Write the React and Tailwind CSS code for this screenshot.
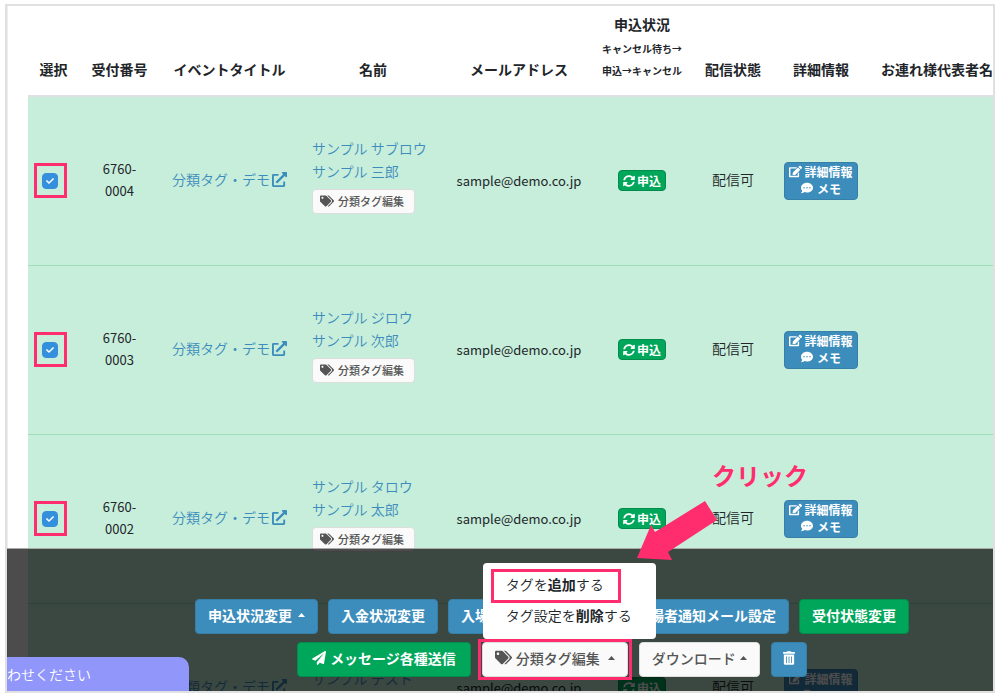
import { FaCheck, FaCommentDots, FaEdit, FaExternalLinkAlt, FaPaperPlane, FaSyncAlt, FaTags, FaTrashAlt } from "react-icons/fa";

const rows = [
  { number: "0004", kana: "サンプル サブロウ", name: "サンプル 三郎", marked: true },
  { number: "0003", kana: "サンプル ジロウ", name: "サンプル 次郎", marked: true },
  { number: "0002", kana: "サンプル タロウ", name: "サンプル 太郎", marked: true },
  { number: "0001", kana: "サンプル テスト", name: "サンプル テスト", marked: false },
];

function Caret() {
  return (
    <svg className="h-1 w-[7px]" viewBox="0 0 8 4" preserveAspectRatio="none" fill="currentColor" aria-hidden="true">
      <path d="M0 4 L4 0 L8 4 Z" />
    </svg>
  );
}

const base = "flex h-[35px] items-center rounded border pb-1 text-sm";
const blue = "border-[#367fa9] bg-[#3c8dbc] font-bold text-white";
const green = "border-[#008d4c] bg-[#00a65a] font-bold text-white";
const light = "border-[#dddddd] bg-[#fafafa] font-medium text-[#555555]";

function Row({ row }) {
  const id = `select-${row.number}`;
  return (
    <tr className="h-[169px] border-b border-[#9fdcb9] bg-[#c7eeda] font-[350]">
      <td className="pl-1.5">
        <div className={`relative flex h-[35px] w-[33px] items-center border-3 pl-[5px] ${row.marked ? "border-[#ff2d6e]" : "border-transparent"}`}>
          <input
            id={id}
            type="checkbox"
            defaultChecked
            aria-label={`6760-${row.number}を選択`}
            className="size-4 appearance-none rounded border border-[#3490dc] bg-white checked:bg-[#3490dc]"
          />
          <FaCheck className="pointer-events-none absolute left-[9px] size-2 text-white" />
        </div>
      </td>
      <td className="pb-0.5 text-center text-[13px] leading-[22px] font-normal">
        6760-
        <br />
        {row.number}
      </td>
      <td className="px-3 pb-0.5">
        <a href="#event" className="flex items-center whitespace-nowrap text-[#3c8dbc]">
          分類タグ・デモ
          <FaExternalLinkAlt className="ml-0.5 size-[15px] shrink-0" />
        </a>
      </td>
      <td className="pl-[13px]">
        <div className="flex flex-col items-start pb-[11px]">
          <a href="#detail" className="whitespace-nowrap text-[#3c8dbc]">{row.kana}</a>
          <a href="#detail" className="whitespace-nowrap text-[#3c8dbc]">{row.name}</a>
          <button type="button" className="mt-1.5 flex h-[25px] items-center gap-1 rounded-sm border border-[#dddddd] bg-[#fafafa] pr-2.5 pl-[7px] text-[11px] font-medium whitespace-nowrap text-[#555555]">
            <FaTags className="size-3.5" />
            分類タグ編集
          </button>
        </div>
      </td>
      <td className="text-center text-[13px] font-normal">sample@demo.co.jp</td>
      <td>
        <button type="button" className="mx-auto flex h-[21px] items-center gap-0.5 rounded-sm border border-[#008d4c] bg-[#00a65a] px-1 text-xs font-bold text-white">
          <FaSyncAlt className="size-3" />
          申込
        </button>
      </td>
      <td className="pb-0.5 text-center">配信可</td>
      <td>
        <button type="button" className="mx-auto flex h-[38px] w-[74px] flex-col items-center justify-center rounded border border-[#367fa9] bg-[#3c8dbc] pb-0.5 text-xs leading-[17px] font-bold text-white">
          <span className="flex items-center gap-0.5">
            <FaEdit className="size-[13px]" />
            詳細情報
          </span>
          <span className="flex items-center gap-1">
            <FaCommentDots className="size-3" />
            メモ
          </span>
        </button>
      </td>
      <td></td>
    </tr>
  );
}

export default function App() {
  return (
    <div className="h-screen bg-white pt-1 pr-[5px] pb-1.5 pl-[5px] font-[family-name:'Noto_Sans_CJK_JP',sans-serif] text-sm text-[#212529]">
      <div className="relative h-full overflow-hidden border-2 border-[#e0e0e0]">
        <div className="h-full border-l border-[#eeeeee] pl-5">
          <table className="w-full table-fixed border-collapse leading-[23px]">
            <colgroup>
              <col className="w-[51px]" />
              <col className="w-[81px]" />
              <col className="w-[139px]" />
              <col className="w-[148px]" />
              <col className="w-[144px]" />
              <col className="w-[102px]" />
              <col className="w-[80px]" />
              <col className="w-[96px]" />
              <col />
            </colgroup>
            <thead>
              <tr className="h-[90px] border-b-2 border-[#dee2e6] align-bottom whitespace-nowrap">
                <th className="pb-3.5">選択</th>
                <th className="pb-3.5">受付番号</th>
                <th className="pb-3.5">イベントタイトル</th>
                <th className="pb-3.5">名前</th>
                <th className="pb-3.5">メールアドレス</th>
                <th className="pb-[13px]">
                  申込状況
                  <div className="pt-0.5 text-[10px] leading-[22px]">
                    キャンセル待ち→
                    <br />
                    申込→キャンセル
                  </div>
                </th>
                <th className="pb-3.5">配信状態</th>
                <th className="pb-3.5">詳細情報</th>
                <th className="pb-3.5 pl-3 text-left">お連れ様代表者名</th>
              </tr>
            </thead>
            <tbody>
              {rows.map((row) => (
                <Row key={row.number} row={row} />
              ))}
            </tbody>
          </table>
        </div>

        <div className="absolute inset-x-0 bottom-0 flex flex-col items-center gap-2 border-t border-[#aaaaaa] bg-black/70 pt-[50px] pb-3.5 pl-[104px] whitespace-nowrap">
          <div className="flex gap-2.5">
            <button type="button" className={`${base} ${blue} gap-1.5 px-3`}>
              申込状況変更
              <Caret />
            </button>
            <button type="button" className={`${base} ${blue} px-3`}>入金状況変更</button>
            <button type="button" className={`${base} ${blue} gap-1.5 px-3`}>
              入場ステータス変更
              <Caret />
            </button>
            <button type="button" className={`${base} ${blue} px-3`}>来場者通知メール設定</button>
            <button type="button" className={`${base} ${green} px-3`}>受付状態変更</button>
          </div>
          <div className="flex gap-[11px]">
            <button type="button" className={`${base} ${green} gap-1 px-3.5`}>
              <FaPaperPlane className="size-3.5" />
              メッセージ各種送信
            </button>
            <div className="relative">
              <button type="button" aria-haspopup="menu" aria-expanded="true" className={`${base} ${light} px-3`}>
                <FaTags className="mr-1 size-[17px]" />
                分類タグ編集
                <span className="ml-2">
                  <Caret />
                </span>
              </button>
              <div className="pointer-events-none absolute -inset-x-1 -inset-y-[3px] border-3 border-[#ff2d6e]" />
              <div role="menu" className="absolute bottom-[38px] left-px flex h-[76px] w-[173px] flex-col rounded bg-white px-2 pt-1.5 font-[350] text-[#212529]">
                <button type="button" role="menuitem" className="h-[34px] w-[130px] border-3 border-[#ff2d6e] pb-1 pl-3 text-left leading-6">
                  タグを<b>追加</b>する
                </button>
                <button type="button" role="menuitem" className="h-[26px] pb-1 pl-[15px] text-left leading-6">
                  タグ設定を<b>削除</b>する
                </button>
              </div>
            </div>
            <button type="button" className={`${base} ${light} gap-1 px-3`}>
              ダウンロード
              <Caret />
            </button>
            <button type="button" aria-label="削除" className={`${base} ${blue} px-[11px]`}>
              <FaTrashAlt className="h-3.5 w-3" />
            </button>
          </div>
        </div>

        <div className="absolute bottom-0 left-0 flex h-[34px] w-[182px] items-center justify-end overflow-hidden rounded-tr-[10px] bg-[#9096fa] pr-[98px] font-[350] whitespace-nowrap text-white">
          お問い合わせください
        </div>

        <div className="pointer-events-none absolute bottom-[130px] left-[630px] text-[#ff2d6e]">
          <p className="pb-2 pl-[75px] text-2xl leading-9 font-bold">クリック</p>
          <svg className="h-[60px] w-[82px]" viewBox="637 502 82 60" fill="currentColor" aria-hidden="true">
            <path d="M705 502 L717 521 L668 553 L672 561 L637 559 L651 526 L655 533 Z" />
          </svg>
        </div>
      </div>
    </div>
  );
}
